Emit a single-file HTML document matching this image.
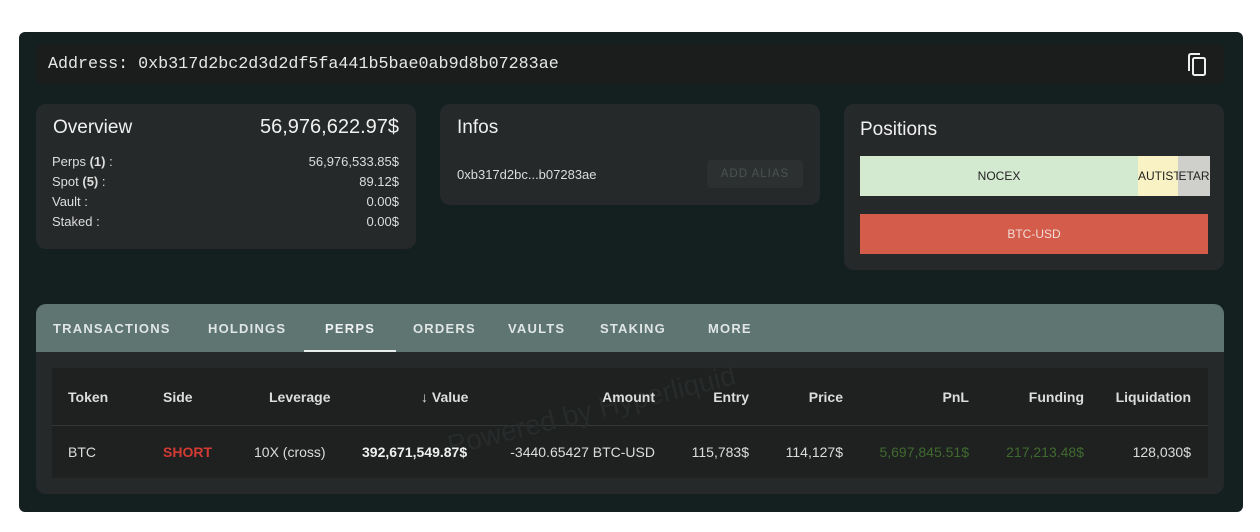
<!DOCTYPE html>
<html><head><style>
*{box-sizing:border-box;margin:0;padding:0}
body{width:1260px;height:532px;background:#fff;font-family:"Liberation Sans",sans-serif;position:relative;overflow:hidden;color:#e8e8e8}
.abs{position:absolute}
#wrap{left:19px;top:32px;width:1224px;height:480px;background:#142020;border-radius:6px}
.card{background:#262929;border-radius:10px}
.t{position:absolute;white-space:nowrap}
.r{text-align:right}
</style></head><body>
<div id="wrap" class="abs"></div>
<div class="abs" style="left:36px;top:44px;width:1188px;height:40px;background:#1b1d1d;border-radius:6px"></div>
<div class="t" style="left:48px;top:55px;font-family:'Liberation Mono',monospace;font-size:16.7px;color:#e6e6e6">Address: 0xb317d2bc2d3d2df5fa441b5bae0ab9d8b07283ae</div>
<svg class="abs" style="left:1186px;top:52px" width="24" height="26" viewBox="0 0 24 26"><path d="M3 4 V19 M3 4 Q3 2 5 2 H14" stroke="#eee" stroke-width="2" fill="none"/><rect x="7" y="6" width="12" height="17" rx="1.5" stroke="#eee" stroke-width="2" fill="none"/></svg>

<div class="abs card" style="left:36px;top:104px;width:380px;height:145px"></div>
<div class="t" style="left:53px;top:117px;font-size:19px;color:#f0f0f0">Overview</div>
<div class="t r" style="left:200px;width:199px;top:116px;font-size:20px;color:#f0f0f0">56,976,622.97$</div>
<div class="t" style="left:52px;top:152px;font-size:13px;line-height:20px;color:#ddd">Perps <b>(1)</b> :<br>Spot <b>(5)</b> :<br>Vault :<br>Staked :</div>
<div class="t r" style="left:200px;width:199px;top:152px;font-size:13px;line-height:20px;color:#ddd">56,976,533.85$<br>89.12$<br>0.00$<br>0.00$</div>

<div class="abs card" style="left:440px;top:104px;width:380px;height:101px"></div>
<div class="t" style="left:457px;top:117px;font-size:19px;color:#f0f0f0">Infos</div>
<div class="t" style="left:457px;top:167px;font-size:13px;color:#ddd">0xb317d2bc...b07283ae</div>
<div class="abs" style="left:707px;top:160px;width:96px;height:28px;background:#2c3030;border-radius:4px;color:#4a5252;font-size:11.5px;letter-spacing:1px;text-align:center;line-height:28px">ADD ALIAS</div>

<div class="abs card" style="left:844px;top:104px;width:380px;height:166px"></div>
<div class="t" style="left:860px;top:119px;font-size:19px;color:#f0f0f0">Positions</div>
<div class="abs" style="left:860px;top:156px;width:278px;height:40px;background:#d3ead0;color:#222;font-size:12px;text-align:center;line-height:40px">NOCEX</div>
<div class="abs" style="left:1138px;top:156px;width:40px;height:40px;background:#f8f2c4;color:#222;font-size:12px;line-height:40px;overflow:hidden;text-align:center">AUTIST</div>
<div class="abs" style="left:1178px;top:156px;width:32px;height:40px;background:#cfcfcc;color:#222;font-size:12px;line-height:40px;overflow:hidden;text-align:center">ETAR</div>
<div class="abs" style="left:860px;top:214px;width:348px;height:40px;background:#d35c4a;color:#f3dcd8;font-size:12px;text-align:center;line-height:40px">BTC-USD</div>

<div class="abs" style="left:36px;top:304px;width:1188px;height:190px;background:#262929;border-radius:10px;overflow:hidden">
 <div class="abs" style="left:0;top:0;width:1188px;height:48px;background:#5f7571"></div>
</div>
<div class="t" style="top:321px;left:53px;font-size:13px;font-weight:bold;letter-spacing:1.2px;color:#dfe6e4">TRANSACTIONS</div>
<div class="t" style="top:321px;left:208px;font-size:13px;font-weight:bold;letter-spacing:1.2px;color:#dfe6e4">HOLDINGS</div>
<div class="t" style="top:321px;left:325px;font-size:13px;font-weight:bold;letter-spacing:1.2px;color:#eef2f1">PERPS</div>
<div class="abs" style="left:304px;top:350px;width:92px;height:2px;background:#e8eeec"></div>
<div class="t" style="top:321px;left:413px;font-size:13px;font-weight:bold;letter-spacing:1.2px;color:#dfe6e4">ORDERS</div>
<div class="t" style="top:321px;left:508px;font-size:13px;font-weight:bold;letter-spacing:1.2px;color:#dfe6e4">VAULTS</div>
<div class="t" style="top:321px;left:600px;font-size:13px;font-weight:bold;letter-spacing:1.2px;color:#dfe6e4">STAKING</div>
<div class="t" style="top:321px;left:708px;font-size:13px;font-weight:bold;letter-spacing:1.2px;color:#dfe6e4">MORE</div>

<div class="abs" style="left:52px;top:368px;width:1156px;height:110px;background:#1f2121"></div>
<div class="abs" style="left:52px;top:425px;width:1156px;height:1px;background:#333737"></div>
<div class="t" style="left:452px;top:430px;font-size:28px;color:#282b2b;transform:rotate(-14deg);transform-origin:left bottom">Powered by Hyperliquid</div>

<div style="font-size:14px;font-weight:bold;color:#dcdcdc">
<div class="t" style="left:68px;top:389px">Token</div>
<div class="t" style="left:163px;top:389px">Side</div>
<div class="t" style="left:269px;top:389px">Leverage</div>
<div class="t" style="left:421px;top:389px">↓ Value</div>
<div class="t r" style="left:555px;width:100px;top:389px">Amount</div>
<div class="t r" style="left:650px;width:99px;top:389px">Entry</div>
<div class="t r" style="left:750px;width:93px;top:389px">Price</div>
<div class="t r" style="left:870px;width:99px;top:389px">PnL</div>
<div class="t r" style="left:984px;width:100px;top:389px">Funding</div>
<div class="t r" style="left:1090px;width:101px;top:389px">Liquidation</div>
</div>
<div style="font-size:14px;color:#dcdcdc">
<div class="t" style="left:68px;top:444px">BTC</div>
<div class="t" style="left:163px;top:444px;color:#d33a34;font-weight:bold">SHORT</div>
<div class="t" style="left:254px;top:444px">10X (cross)</div>
<div class="t" style="left:362px;top:444px;font-weight:bold;color:#eee">392,671,549.87$</div>
<div class="t r" style="left:480px;width:175px;top:444px">-3440.65427 BTC-USD</div>
<div class="t r" style="left:650px;width:99px;top:444px">115,783$</div>
<div class="t r" style="left:750px;width:93px;top:444px">114,127$</div>
<div class="t r" style="left:850px;width:119px;top:444px;color:#3f6a2e">5,697,845.51$</div>
<div class="t r" style="left:984px;width:100px;top:444px;color:#3f6a2e">217,213.48$</div>
<div class="t r" style="left:1090px;width:101px;top:444px">128,030$</div>
</div>
</body></html>
